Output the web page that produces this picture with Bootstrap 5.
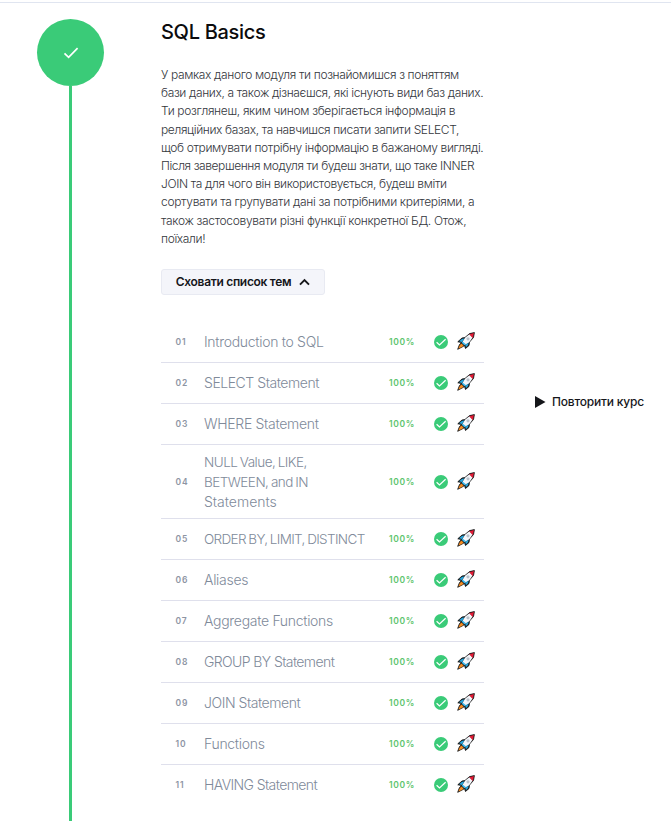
<!DOCTYPE html>
<html lang="uk">
<head>
<meta charset="utf-8">
<meta name="viewport" content="width=device-width, initial-scale=1">
<title>SQL Basics</title>
<link href="https://cdn.jsdelivr.net/npm/bootstrap@5.3.0/dist/css/bootstrap.min.css" rel="stylesheet">
<style>
body{font-family:Inter,"Open Sans",sans-serif;color:#111;background:#fff;height:821px;overflow:hidden}
.topline{height:3px;border-bottom:1px solid #e0e5f0}
.page{height:818px}
.rail{width:67px;margin-left:37px;padding-top:16px}
.disc{width:67px;height:67px;background:#3acb78}
.stem{width:3px;background:#3acb78}
.module{width:323px;margin-left:57px}
.module h1{font-size:20px;line-height:28px;font-weight:550;margin:15px 0 20px;letter-spacing:-.3px;color:#0b0b0d}
.about{font-size:12px;line-height:18.2px;font-weight:300;color:#33363c;margin:0 0 21px;white-space:nowrap;letter-spacing:-.36px}
.about .snug{letter-spacing:-.41px}
.about .tight{letter-spacing:-.36px}
.about .loose{letter-spacing:-.32px}
.about .narrow{letter-spacing:-.37px}
.toggle{--bs-btn-font-size:12px;--bs-btn-bg:#f4f5fa;--bs-btn-border-color:#e8eaf2;width:164px;height:26px;font-weight:600;--bs-btn-color:#15161a;border-radius:3px;white-space:nowrap;letter-spacing:-.31px}
.topics{margin-top:27px}
.topic{min-height:41px;padding:6px 0 7px;border-bottom:1px solid #dfe0ec}
.topic.tall{padding:7px 0 6px}
.topic:last-child{border-color:transparent}
.num{width:43px;padding:1px 0 0 14.5px;font-size:8.5px;font-weight:600;letter-spacing:.8px;color:#8d94a3}
.name{width:166px;font-size:14px;line-height:20px;font-weight:300;color:#808a9a;white-space:nowrap;letter-spacing:-.3px}
.name.caps{letter-spacing:-.45px}
.name.caps-wide{letter-spacing:-.6px}
.name.caps-long{font-size:13.5px;letter-spacing:-.64px;word-spacing:-.8px}
.name.multi{letter-spacing:0}
.name.multi span{font-size:13.5px;letter-spacing:-.52px;word-spacing:-.8px}
.pct{width:64px;padding:1px 0 0 19px;font-size:8.5px;font-weight:600;letter-spacing:.65px;color:#5cc46c}
.rocket{margin:0 0 1px 9px}
.tall .rocket{margin-bottom:3px}
.again{margin-left:50px;margin-top:390px;height:18px;font-size:12px;font-weight:550;color:#15161a;white-space:nowrap;letter-spacing:-.2px}
.again svg{margin-right:5px}
</style>
</head>
<body>
<svg width="0" height="0" class="position-absolute" aria-hidden="true">
<symbol id="done" viewBox="0 0 14 14"><circle cx="7" cy="7" r="7" fill="#3acb78"/><path d="M2.6 7.2 5.5 10 11.6 4.2" fill="none" stroke="#fff" stroke-width="1.2"/></symbol>
<symbol id="rocket" viewBox="0 0 18 18">
<path d="M5 6 8 5.5 12.5 1.6 17.4.6 16.5 5.5 12.5 10 12 13.5 8.5 16.5 7.5 13.5 5.5 14.8.7 17.3 2.4 12.8 4.5 10.5.8 9.8Z" fill="#111" stroke="#111" stroke-width=".8" stroke-linejoin="round"/>
<path d="M5.2 10.2 8 5.8 12.4 2.3 15.7 5.6 12 10.4 7.6 13.1Z" fill="#f4f6fa"/>
<path d="M12.2 2.2 17 1 15.8 5.9Z" fill="#e51b36"/>
<path d="M2 9.2 5.2 6.7 7.5 6.4 4.9 9.9ZM8.3 13 11.5 10.6 11.2 13.1 8.9 15.3Z" fill="#28a9e0"/>
<path d="M5.6 9.4 8.7 12.1 7.3 13.3 4.7 10.7Z" fill="#39b9ee"/>
<path d="M1.4 16.5 2.8 13 4.5 11.5 6.6 13.6 5 15.1Z" fill="#f58b20"/>
<circle cx="11" cy="6.8" r="1.6" fill="#b9c2cc"/>
</symbol>
</svg>
<div class="topline"></div>
<main class="page d-flex align-items-start">
<div class="rail h-100 d-flex flex-column align-items-center flex-shrink-0">
<div class="disc rounded-circle d-flex align-items-center justify-content-center flex-shrink-0"><svg width="16" height="14" viewBox="0 0 16 14"><path d="M1.5 7.3 5.6 11.3 14.6 2.2" fill="none" stroke="#fff" stroke-width="1.7"/></svg></div>
<div class="stem flex-grow-1"></div>
</div>
<section class="module flex-shrink-0">
<h1>SQL Basics</h1>
<p class="about"><span>У рамках даного модуля ти познайомишся з поняттям</span><br><span class="narrow">бази даних, а також дізнаєшся, які існують види баз даних.</span><br><span class="loose">Ти розглянеш, яким чином зберігається інформація в</span><br><span>реляційних базах, та навчишся писати запити SELECT,</span><br><span class="narrow">щоб отримувати потрібну інформацію в бажаному вигляді.</span><br><span class="snug">Після завершення модуля ти будеш знати, що таке INNER</span><br><span class="tight">JOIN та для чого він використовується, будеш вміти</span><br><span class="loose">сортувати та групувати дані за потрібними критеріями, а</span><br><span class="loose">також застосовувати різні функції конкретної БД. Отож,</span><br><span>поїхали!</span></p>
<button class="toggle btn d-flex align-items-center justify-content-center gap-2 p-0" type="button"><span>Сховати список тем</span><svg width="11" height="8" viewBox="0 0 11 8"><path d="M1 6.7 5.5 2 10 6.7" fill="none" stroke="#15161a" stroke-width="1.9"/></svg></button>
<div class="topics">
<div class="topic d-flex align-items-center"><span class="num">01</span><span class="name">Introduction to SQL</span><span class="pct">100%</span><svg width="14" height="14"><use href="#done"/></svg><svg class="rocket" width="18" height="18"><use href="#rocket"/></svg></div>
<div class="topic d-flex align-items-center"><span class="num">02</span><span class="name caps">SELECT Statement</span><span class="pct">100%</span><svg width="14" height="14"><use href="#done"/></svg><svg class="rocket" width="18" height="18"><use href="#rocket"/></svg></div>
<div class="topic d-flex align-items-center"><span class="num">03</span><span class="name">WHERE Statement</span><span class="pct">100%</span><svg width="14" height="14"><use href="#done"/></svg><svg class="rocket" width="18" height="18"><use href="#rocket"/></svg></div>
<div class="topic tall d-flex align-items-center"><span class="num">04</span><span class="name multi"><span>NULL Value, LIKE,</span><br><span>BETWEEN, and IN</span><br>Statements</span><span class="pct">100%</span><svg width="14" height="14"><use href="#done"/></svg><svg class="rocket" width="18" height="18"><use href="#rocket"/></svg></div>
<div class="topic d-flex align-items-center"><span class="num">05</span><span class="name caps-long">ORDER BY, LIMIT, DISTINCT</span><span class="pct">100%</span><svg width="14" height="14"><use href="#done"/></svg><svg class="rocket" width="18" height="18"><use href="#rocket"/></svg></div>
<div class="topic d-flex align-items-center"><span class="num">06</span><span class="name">Aliases</span><span class="pct">100%</span><svg width="14" height="14"><use href="#done"/></svg><svg class="rocket" width="18" height="18"><use href="#rocket"/></svg></div>
<div class="topic d-flex align-items-center"><span class="num">07</span><span class="name">Aggregate Functions</span><span class="pct">100%</span><svg width="14" height="14"><use href="#done"/></svg><svg class="rocket" width="18" height="18"><use href="#rocket"/></svg></div>
<div class="topic d-flex align-items-center"><span class="num">08</span><span class="name caps-wide">GROUP BY Statement</span><span class="pct">100%</span><svg width="14" height="14"><use href="#done"/></svg><svg class="rocket" width="18" height="18"><use href="#rocket"/></svg></div>
<div class="topic d-flex align-items-center"><span class="num">09</span><span class="name caps">JOIN Statement</span><span class="pct">100%</span><svg width="14" height="14"><use href="#done"/></svg><svg class="rocket" width="18" height="18"><use href="#rocket"/></svg></div>
<div class="topic d-flex align-items-center"><span class="num">10</span><span class="name">Functions</span><span class="pct">100%</span><svg width="14" height="14"><use href="#done"/></svg><svg class="rocket" width="18" height="18"><use href="#rocket"/></svg></div>
<div class="topic d-flex align-items-center"><span class="num">11</span><span class="name caps-wide">HAVING Statement</span><span class="pct">100%</span><svg width="14" height="14"><use href="#done"/></svg><svg class="rocket" width="18" height="18"><use href="#rocket"/></svg></div>
</div>
</section>
<a class="again d-flex align-items-center text-decoration-none" href="#"><svg width="13" height="14" viewBox="0 0 13 14"><path d="M1 1 11.5 7 1 13Z" fill="#15161a"/></svg><span>Повторити курс</span></a>
</main>
<script src="https://cdn.jsdelivr.net/npm/bootstrap@5.3.0/dist/js/bootstrap.bundle.min.js"></script>
</body>
</html>
